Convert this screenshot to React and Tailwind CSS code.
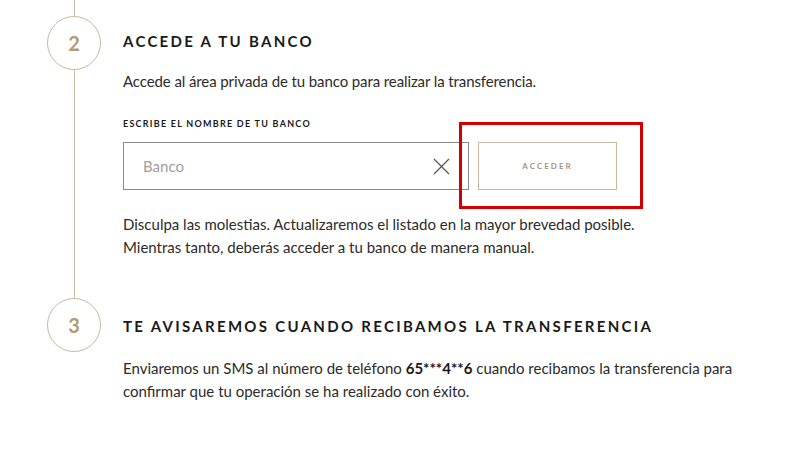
import React from 'react';

const StepCircle = ({ n }) => (
  <div className="w-[54px] h-[54px] shrink-0 rounded-full border border-[#c9b99e] flex items-center justify-center text-[20px] font-bold text-[#b39b73]">
    {n}
  </div>
);

const App = () => {
  return (
    <div className="relative w-[800px] h-[452px] overflow-hidden bg-white font-['Lato',sans-serif] text-[#2b2b2b]">
      {/* Step 2 */}
      <div className="flex h-[298px]">
        <div className="ml-[47px] w-[54px] flex flex-col items-center">
          <div className="w-px h-[16px] bg-[#c9b99e]"></div>
          <StepCircle n="2" />
          <div className="w-px flex-1 bg-[#c9b99e]"></div>
        </div>
        <div className="ml-[22px] pt-[31px]">
          <h2 className="text-[15px] leading-[20px] font-bold tracking-[2.3px] text-[#1a1a1a]">ACCEDE A TU BANCO</h2>
          <p className="mt-[19px] text-[15px] leading-[23px] tracking-[-0.1px]">
            Accede al área privada de tu banco para realizar la transferencia.
          </p>
          <div className="mt-[25px] text-[9px] leading-[12px] font-bold tracking-[1.25px] text-[#1a1a1a]">
            ESCRIBE EL NOMBRE DE TU BANCO
          </div>
          <div className="mt-[12px] flex gap-[9px]">
            <div className="w-[346px] h-[48px] border border-[#8a8a8a] flex items-center justify-between pl-[19px] pr-[18px]">
              <span className="text-[15px] text-[#a0a0a0]">Banco</span>
              <svg width="17" height="17" viewBox="0 0 17 17" fill="none" stroke="#555" strokeWidth="1.2">
                <path d="M1 1L16 16M16 1L1 16" />
              </svg>
            </div>
            <button className="w-[139px] h-[48px] border border-[#c9b99e] text-[8px] font-bold tracking-[2px] text-[#a8967a]">
              ACCEDER
            </button>
          </div>
          <p className="mt-[23px] text-[15px] leading-[23px]">
            Disculpa las molestias. Actualizaremos el listado en la mayor brevedad posible.
            <br />
            Mientras tanto, deberás acceder a tu banco de manera manual.
          </p>
        </div>
      </div>

      {/* Step 3 */}
      <div className="flex">
        <div className="ml-[47px] w-[54px] flex flex-col items-center">
          <StepCircle n="3" />
        </div>
        <div className="ml-[22px] pt-[18px]">
          <h2 className="text-[15px] leading-[20px] font-bold tracking-[2.3px] text-[#1a1a1a]">
            TE AVISAREMOS CUANDO RECIBAMOS LA TRANSFERENCIA
          </h2>
          <p className="mt-[21px] text-[15px] leading-[23px]">
            Enviaremos un SMS al número de teléfono <b className="font-bold text-[#1a1a1a]">65***4**6</b> cuando recibamos la transferencia para
            <br />
            confirmar que tu operación se ha realizado con éxito.
          </p>
        </div>
      </div>

      {/* Highlight annotation */}
      <div className="absolute left-[459px] top-[122px] w-[184px] h-[87px] border-[3px] border-[#d40000]"></div>
    </div>
  );
};

export default App;
